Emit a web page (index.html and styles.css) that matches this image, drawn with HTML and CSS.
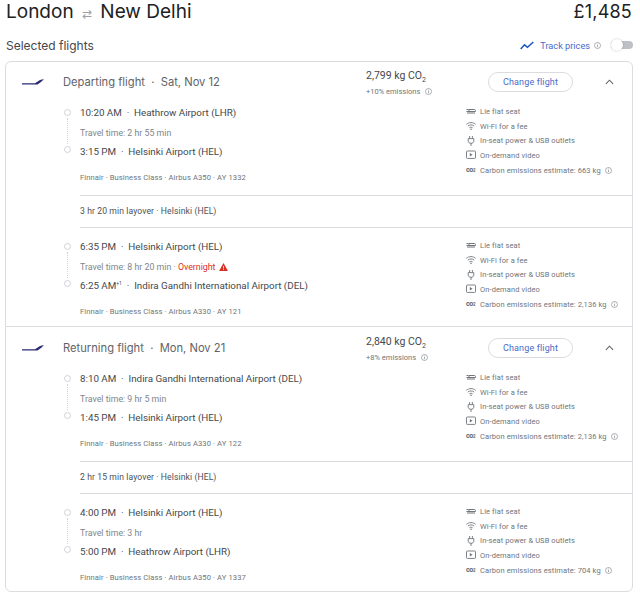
FILE: index.html
```html
<!DOCTYPE html>
<html>
    <head>
        <meta charset="utf-8">
        <title>London to New Delhi</title>
        <link rel="stylesheet" href="styles.css">
    </head>
    <body>

    <svg class="defs" width="0" height="0">
        <symbol id="i-seat" viewBox="0 0 10 10">
            <path d="M0.500 5.500h9M1 7h8M3 5.500V3.500h5.500c.6 0 1 .5 1 1v1M0.500 3.500h2" fill="none" stroke="currentColor" stroke-width="1"/>
        </symbol>
        <symbol id="i-wifi" viewBox="0 0 10 10">
            <path d="M0.300 3.400C3 1 7 1 9.700 3.400M1.800 5.100c1.800-1.500 4.600-1.500 6.400 0M3.400 6.800c.9-.7 2.300-.7 3.200 0" fill="none" stroke="currentColor" stroke-width=".9"/>
            <circle cx="5" cy="8.200" r=".8" fill="currentColor"/>
        </symbol>
        <symbol id="i-plug" viewBox="0 0 10 10">
            <path d="M3.600 0v2.500M6.400 0v2.500M2.200 2.600h5.600v2.600c0 1.200-1.200 2.100-2.800 2.100s-2.800-.9-2.800-2.100zM5 7.300V10" fill="none" stroke="currentColor" stroke-width=".9"/>
        </symbol>
        <symbol id="i-video" viewBox="0 0 10 10">
            <rect x=".5" y="1" width="9" height="7.400" rx=".8" fill="none" stroke="currentColor" stroke-width=".9"/>
            <path d="M3.800 2.900l2.800 1.800-2.800 1.800z" fill="currentColor"/>
        </symbol>
        <symbol id="i-info" viewBox="0 0 10 10">
            <circle cx="5" cy="5" r="4.300" fill="none" stroke="currentColor" stroke-width=".8"/>
            <path d="M5 4.400v3M5 2.400v1" stroke="currentColor" stroke-width=".9"/>
        </symbol>
        <symbol id="i-logo" viewBox="0 0 22 6">
            <path d="M0 4.200H13L18 1 22 0 19 3 15.500 5.500H0z" fill="#2b2a78"/>
        </symbol>
        <symbol id="i-warn" viewBox="0 0 10 9">
            <path d="M5 0l5 9H0z" fill="#d93025"/>
            <path d="M5 3.200v3M5 6.800v1" stroke="#fff" stroke-width=".9"/>
        </symbol>
    </svg>

    <header class="trip">
        <div class="route">London <span class="swap">&#8644;</span> New Delhi</div>
        <div class="price">£1,485</div>
    </header>

    <div class="selected">
        <div class="selected-title">Selected flights</div>
        <div class="track">
            <svg class="track-icon" viewBox="0 0 14 9"><path d="M.7 8l3.800-4.200 3 2.500L13.300 1" fill="none" stroke="#1a56c4" stroke-width="1.500"/></svg>
            <span class="track-label">Track prices</span>
            <svg class="info track-info"><use href="#i-info"/></svg>
            <span class="toggle"><span class="knob"></span></span>
        </div>
    </div>

    <div class="card">

        <section class="slice">
            <div class="slice-head">
                <svg class="logo"><use href="#i-logo"/></svg>
                <div class="slice-title">Departing flight &nbsp;·&nbsp; Sat, Nov 12</div>
                <div class="co2">
                    <div class="co2-total">2,799 kg CO<sub>2</sub></div>
                    <div class="co2-diff">+10% emissions <svg class="info"><use href="#i-info"/></svg></div>
                </div>
                <button class="change">Change flight</button>
                <svg class="chevron" viewBox="0 0 10 6"><path d="M1 5l4-4 4 4" fill="none" stroke="#5f6368" stroke-width="1.200"/></svg>
            </div>
            <div class="leg">
                <div class="timeline"><i></i><b></b><i></i></div>
                <div class="leg-main">
                    <div class="stop">10:20 AM &nbsp;·&nbsp; Heathrow Airport (LHR)</div>
                    <div class="travel">Travel time: 2 hr 55 min</div>
                    <div class="stop">3:15 PM &nbsp;·&nbsp; Helsinki Airport (HEL)</div>
                    <div class="carrier">Finnair · Business Class · Airbus A350 · AY 1332</div>
                </div>
                <ul class="amenities">
                    <li><svg><use href="#i-seat"/></svg>Lie flat seat</li>
                    <li><svg><use href="#i-wifi"/></svg>Wi-Fi for a fee</li>
                    <li><svg><use href="#i-plug"/></svg>In-seat power &amp; USB outlets</li>
                    <li><svg><use href="#i-video"/></svg>On-demand video</li>
                    <li><span class="co2-mark">co<small>2</small></span>Carbon emissions estimate: 663 kg <svg class="info"><use href="#i-info"/></svg></li>
                </ul>
            </div>
            <div class="layover">3 hr 20 min layover · Helsinki (HEL)</div>
            <div class="leg leg-last">
                <div class="timeline"><i></i><b></b><i></i></div>
                <div class="leg-main">
                    <div class="stop">6:35 PM &nbsp;·&nbsp; Helsinki Airport (HEL)</div>
                    <div class="travel">Travel time: 8 hr 20 min · <span class="overnight">Overnight</span> <svg class="warn"><use href="#i-warn"/></svg></div>
                    <div class="stop">6:25 AM<sup>+1</sup> &nbsp;·&nbsp; Indira Gandhi International Airport (DEL)</div>
                    <div class="carrier">Finnair · Business Class · Airbus A330 · AY 121</div>
                </div>
                <ul class="amenities">
                    <li><svg><use href="#i-seat"/></svg>Lie flat seat</li>
                    <li><svg><use href="#i-wifi"/></svg>Wi-Fi for a fee</li>
                    <li><svg><use href="#i-plug"/></svg>In-seat power &amp; USB outlets</li>
                    <li><svg><use href="#i-video"/></svg>On-demand video</li>
                    <li><span class="co2-mark">co<small>2</small></span>Carbon emissions estimate: 2,136 kg <svg class="info"><use href="#i-info"/></svg></li>
                </ul>
            </div>
        </section>

        <section class="slice">
            <div class="slice-head">
                <svg class="logo"><use href="#i-logo"/></svg>
                <div class="slice-title">Returning flight &nbsp;·&nbsp; Mon, Nov 21</div>
                <div class="co2">
                    <div class="co2-total">2,840 kg CO<sub>2</sub></div>
                    <div class="co2-diff">+8% emissions <svg class="info"><use href="#i-info"/></svg></div>
                </div>
                <button class="change">Change flight</button>
                <svg class="chevron" viewBox="0 0 10 6"><path d="M1 5l4-4 4 4" fill="none" stroke="#5f6368" stroke-width="1.200"/></svg>
            </div>
            <div class="leg">
                <div class="timeline"><i></i><b></b><i></i></div>
                <div class="leg-main">
                    <div class="stop">8:10 AM &nbsp;·&nbsp; Indira Gandhi International Airport (DEL)</div>
                    <div class="travel">Travel time: 9 hr 5 min</div>
                    <div class="stop">1:45 PM &nbsp;·&nbsp; Helsinki Airport (HEL)</div>
                    <div class="carrier">Finnair · Business Class · Airbus A330 · AY 122</div>
                </div>
                <ul class="amenities">
                    <li><svg><use href="#i-seat"/></svg>Lie flat seat</li>
                    <li><svg><use href="#i-wifi"/></svg>Wi-Fi for a fee</li>
                    <li><svg><use href="#i-plug"/></svg>In-seat power &amp; USB outlets</li>
                    <li><svg><use href="#i-video"/></svg>On-demand video</li>
                    <li><span class="co2-mark">co<small>2</small></span>Carbon emissions estimate: 2,136 kg <svg class="info"><use href="#i-info"/></svg></li>
                </ul>
            </div>
            <div class="layover">2 hr 15 min layover · Helsinki (HEL)</div>
            <div class="leg leg-last">
                <div class="timeline"><i></i><b></b><i></i></div>
                <div class="leg-main">
                    <div class="stop">4:00 PM &nbsp;·&nbsp; Helsinki Airport (HEL)</div>
                    <div class="travel">Travel time: 3 hr</div>
                    <div class="stop">5:00 PM &nbsp;·&nbsp; Heathrow Airport (LHR)</div>
                    <div class="carrier">Finnair · Business Class · Airbus A350 · AY 1337</div>
                </div>
                <ul class="amenities">
                    <li><svg><use href="#i-seat"/></svg>Lie flat seat</li>
                    <li><svg><use href="#i-wifi"/></svg>Wi-Fi for a fee</li>
                    <li><svg><use href="#i-plug"/></svg>In-seat power &amp; USB outlets</li>
                    <li><svg><use href="#i-video"/></svg>On-demand video</li>
                    <li><span class="co2-mark">co<small>2</small></span>Carbon emissions estimate: 704 kg <svg class="info"><use href="#i-info"/></svg></li>
                </ul>
            </div>
        </section>

    </div>

    </body>
</html>
```

FILE: styles.css
```css
body, html {
    margin: 0;
    padding: 0;
    background: #fff;
    color: #44484c;
    font-family: "Roboto", "Liberation Sans", sans-serif;
}
.defs {
    display: block;
    height: 0;
}
.trip {
    display: flex;
    justify-content: space-between;
    align-items: center;
    height: 23px;
    padding: 0 8px 0 6px;
    color: #202124;
    font-family: "Inter", sans-serif;
    font-size: 19px;
}
.swap {
    color: #9aa0a6;
    font-size: 12px;
    margin: 0 3px;
}
.price {
    font-size: 18px;
    letter-spacing: .2px;
}
.selected {
    display: flex;
    justify-content: space-between;
    align-items: center;
    height: 20px;
    margin-top: 12px;
    padding: 0 7px 0 6px;
    margin-bottom: 6px;
}
.selected-title {
    font-family: "Inter", sans-serif;
    font-size: 12px;
}
.track {
    display: flex;
    align-items: center;
    color: #4a6bc8;
    font-size: 9.200px;
}
.track-icon {
    width: 14px;
    height: 9px;
    margin-right: 6px;
}
.track-info {
    width: 9px;
    height: 9px;
    margin: 0 10px 0 4px;
}
.toggle {
    position: relative;
    display: block;
    width: 22px;
    height: 8px;
    background: #bdc1c6;
    border-radius: 4px;
}
.knob {
    position: absolute;
    left: 0;
    top: -2px;
    width: 12px;
    height: 12px;
    background: #fff;
    border-radius: 50%;
    box-shadow: 0 0 2px rgba(60, 64, 67, .35);
}
.info {
    display: inline-block;
    width: 7px;
    height: 7px;
    color: #70757a;
    vertical-align: -1px;
}
.card {
    margin: 0 7px 0 5px;
    border: solid 1px #dadce0;
    border-radius: 6px;
    height: 531px;
    box-sizing: border-box;
}
.slice + .slice {
    border-top: solid 1px #dadce0;
}
.slice-head {
    display: flex;
    align-items: center;
    height: 38px;
    padding-top: 2px;
    box-sizing: border-box;
}
.slice + .slice .slice-head {
    height: 39px;
}
.logo {
    width: 22px;
    height: 6px;
    margin-left: 16px;
    flex: none;
}
.slice-title {
    width: 303px;
    margin-left: 19px;
    color: #5f6368;
    font-family: "Inter", sans-serif;
    font-size: 11.200px;
}
.co2 {
    width: 122px;
    padding-top: 2px;
    flex: none;
}
.co2-total {
    font-size: 10.500px;
    line-height: 13px;
}
.co2-total sub {
    font-size: 7px;
    line-height: 0;
}
.co2-diff {
    margin-top: 4px;
    color: #70757a;
    font-size: 7.500px;
    line-height: 11px;
}
.co2-diff .info {
    margin-left: 3px;
}
.change {
    width: 85px;
    height: 20px;
    padding: 0;
    background: #fff;
    border: solid 1px #dadce0;
    border-radius: 10px;
    color: #4a6bc8;
    font-family: "Roboto", sans-serif;
    font-size: 9px;
    letter-spacing: .15px;
    flex: none;
}
.chevron {
    width: 9px;
    height: 6px;
    margin-left: 32px;
    flex: none;
}
.leg {
    display: flex;
    height: 95px;
    padding-left: 57px;
    box-sizing: border-box;
}
.leg-last {
    height: 98px;
    padding-top: 6px;
}
.timeline {
    display: flex;
    flex-direction: column;
    align-items: center;
    width: 8px;
    height: 44px;
    margin: 9px 9px 0 0;
    flex: none;
}
.timeline i {
    display: block;
    width: 7px;
    height: 7px;
    box-sizing: border-box;
    border: solid 1px #d0d3d7;
    border-radius: 50%;
    flex: none;
}
.timeline b {
    flex: 1;
    width: 0;
    margin: 2px 0;
    border-left: dotted 1px #d0d3d7;
}
.leg-main {
    width: 386px;
    flex: none;
    padding-top: 6px;
}
.stop {
    height: 14px;
    font-size: 9.800px;
    line-height: 14px;
    white-space: nowrap;
}
.stop sup {
    font-size: 5px;
    line-height: 0;
}
.travel {
    height: 12px;
    margin: 7px 0 6px;
    color: #80868b;
    font-size: 8.800px;
    line-height: 12px;
    white-space: nowrap;
}
.overnight {
    color: #d93025;
}
.warn {
    display: inline-block;
    width: 9px;
    height: 8px;
    margin-left: 1px;
    vertical-align: -1px;
}
.carrier {
    margin-top: 13px;
    color: #70757a;
    font-size: 7.600px;
    line-height: 12px;
    letter-spacing: .1px;
    white-space: nowrap;
}
.amenities {
    list-style: none;
    margin: 0;
    padding: 4px 0 0;
    color: #70757a;
    font-size: 7.500px;
    letter-spacing: .1px;
}
.amenities li {
    display: flex;
    align-items: center;
    gap: 4px;
    height: 14.700px;
    white-space: nowrap;
}
.amenities li > svg:first-child {
    width: 10px;
    height: 10px;
    color: #70757a;
}
.amenities li .info {
    margin-left: 0;
}
.co2-mark {
    width: 10px;
    color: #5f6368;
    font-size: 7px;
    font-weight: bold;
    letter-spacing: -.3px;
}
.co2-mark small {
    font-size: 4.500px;
}
.layover {
    margin-left: 74px;
    height: 33px;
    box-sizing: border-box;
    border-top: solid 1px #dadce0;
    border-bottom: solid 1px #dadce0;
    color: #4d5156;
    font-size: 8.600px;
    line-height: 31px;
    letter-spacing: .1px;
}
```
